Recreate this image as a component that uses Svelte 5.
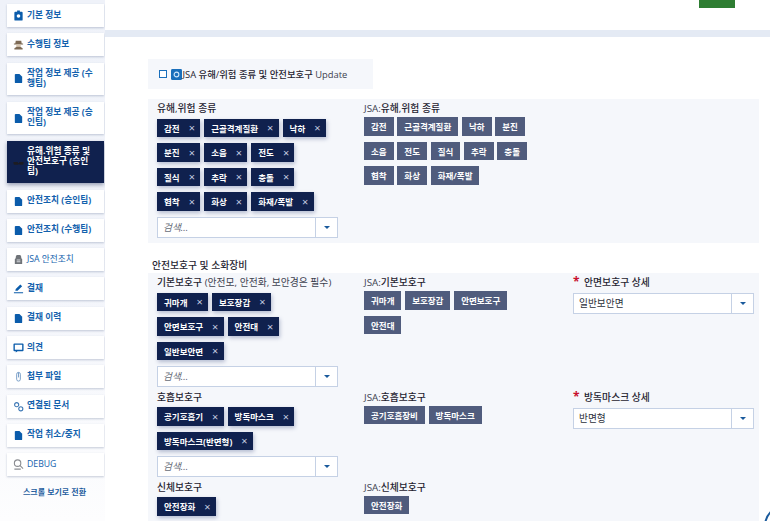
<script>
	const docIcon = 'M6 2h8l6 6v12a2 2 0 0 1-2 2H6a2 2 0 0 1-2-2V4a2 2 0 0 1 2-2z';

	const menu = [
		{ label: '기본 정보', icon: 'clip' },
		{ label: '수행팀 정보', icon: 'person' },
		{ label: '작업 정보 제공 (수행팀)', icon: 'doc' },
		{ label: '작업 정보 제공 (승인팀)', icon: 'doc' },
		{ label: '유해.위험 종류 및 안전보호구 (승인팀)', icon: 'glasses', active: true },
		{ label: '안전조치 (승인팀)', icon: 'doc' },
		{ label: '안전조치 (수행팀)', icon: 'doc' },
		{ label: 'JSA 안전조치', icon: 'jsa', light: true },
		{ label: '결재', icon: 'pen' },
		{ label: '결재 이력', icon: 'doc' },
		{ label: '의견', icon: 'comment' },
		{ label: '첨부 파일', icon: 'paperclip' },
		{ label: '연결된 문서', icon: 'link' },
		{ label: '작업 취소/중지', icon: 'doc' },
		{ label: 'DEBUG', icon: 'debug', light: true }
	];

	const hazards = ['감전', '근골격계질환', '낙하', '분진', '소음', '전도', '질식', '추락', '충돌', '협착', '화상', '화재/폭발'];
	const basicGear = ['귀마개', '보호장갑', '안면보호구', '안전대', '일반보안면'];
	const jsaBasicGear = ['귀마개', '보호장갑', '안면보호구', '안전대'];
	const breathGear = ['공기호흡기', '방독마스크', '방독마스크(반면형)'];
	const jsaBreathGear = ['공기호흡장비', '방독마스크'];
</script>

{#snippet tags(items)}
	<div class="tags">
		{#each items as item}
			<span class="tag">{item}<i>×</i></span>
		{/each}
	</div>
{/snippet}

{#snippet jsaTags(items)}
	<div class="jsa-tags">
		{#each items as item}
			<span class="jsa-tag">{item}</span>
		{/each}
	</div>
{/snippet}

{#snippet combo(text, placeholder)}
	<div class="combo">
		<span class="combo-text" class:placeholder>{text}</span>
		<span class="combo-btn"><b></b></span>
	</div>
{/snippet}

{#snippet jsaLabel(text)}
	<div class="label"><span class="thin">JSA:</span>{text}</div>
{/snippet}

<div class="page">
	<nav class="sidebar">
		{#each menu as item}
			<a class="nav-item" class:active={item.active} class:light={item.light}>
				<svg class="nav-icon" viewBox="0 0 24 24">
					{#if item.icon === 'doc'}
						<path d={docIcon} />
					{:else if item.icon === 'clip'}
						<path fill-rule="evenodd" d="M9 1h6v3h4a2 2 0 0 1 2 2v15a2 2 0 0 1-2 2H5a2 2 0 0 1-2-2V6a2 2 0 0 1 2-2h4zM12 9a4 4 0 1 0 0 8 4 4 0 0 0 0-8z" />
					{:else if item.icon === 'person'}
						<path class="tan" d="M6 4h12l1 6h3v2H2v-2h3z" />
						<path class="skin" d="M7 12h10v5H7z" />
						<path class="tan" d="M3 23v-3l5-3h8l5 3v3z" />
					{:else if item.icon === 'glasses'}
						<path class="dark" d="M1 11h9l1 2h2l1-2h9v3a3 3 0 0 1-3 3h-4a3 3 0 0 1-3-3 3 3 0 0 1-3 3H4a3 3 0 0 1-3-3z" />
					{:else if item.icon === 'jsa'}
						<path class="grey" d="M8 2h8l2 4v3l2 2v11H4V11l2-2V6z" />
						<path class="cut" d="M8 12h8v2H8zM8 16h8v2H8z" />
					{:else if item.icon === 'pen'}
						<path d="M2 20h20v2.5H2zM5 17l1-4L16 3l4 4L10 17z" />
					{:else if item.icon === 'comment'}
						<path d="M21 3H3a2 2 0 0 0-2 2v13a2 2 0 0 0 2 2h3v3l4-3h11a2 2 0 0 0 2-2V5a2 2 0 0 0-2-2zm-1 14H4V6h16z" />
					{:else if item.icon === 'paperclip'}
						<rect class="line clip-line" x="8" y="3" width="8" height="19" rx="4" />
						<path class="line clip-line" d="M12 3v11" />
					{:else if item.icon === 'link'}
						<circle class="line link-line" cx="8" cy="8" r="4.5" />
						<circle class="line link-line" cx="17" cy="17" r="4.5" />
					{:else if item.icon === 'debug'}
						<circle class="line grey-line" cx="10" cy="9" r="7" />
						<path class="line grey-line" d="M15 14l7 7M3 22h14" />
					{/if}
				</svg>
				<span class="nav-text">{item.label}</span>
			</a>
		{/each}
		<div class="scroll-toggle">스크롤 보기로 전환</div>
	</nav>

	<main class="main">
		<header class="topbar"><button class="save" aria-label="저장"></button></header>
		<div class="band"></div>

		<div class="content">
			<div class="update-box">
				<span class="checkbox"></span>
				<svg class="sync" viewBox="0 0 12 12">
					<rect width="12" height="12" rx="1.5" />
					<circle cx="6" cy="6" r="2.6" />
				</svg>
				<span class="update-text">JSA 유해/위험 종류 및 안전보호구 <span class="thin">Update</span></span>
			</div>

			<section class="panel first">
				<div class="row">
					<div class="col">
						<div class="label">유해,위험 종류</div>
						{@render tags(hazards)}
						{@render combo('검색...', true)}
					</div>
					<div class="col">
						{@render jsaLabel('유해,위험 종류')}
						{@render jsaTags(hazards)}
					</div>
				</div>
			</section>

			<h3 class="heading">안전보호구 및 소화장비</h3>

			<section class="panel">
				<div class="row">
					<div class="col">
						<div class="label">기본보호구 <span class="thin">(안전모, 안전화, 보안경은 필수)</span></div>
						{@render tags(basicGear)}
						{@render combo('검색...', true)}
					</div>
					<div class="col">
						{@render jsaLabel('기본보호구')}
						{@render jsaTags(jsaBasicGear)}
					</div>
					<div class="col">
						<div class="label"><span class="req">*</span> 안면보호구 상세</div>
						<div class="detail">{@render combo('일반보안면', false)}</div>
					</div>
				</div>
				<div class="row">
					<div class="col">
						<div class="label">호흡보호구</div>
						{@render tags(breathGear)}
						{@render combo('검색...', true)}
					</div>
					<div class="col">
						{@render jsaLabel('호흡보호구')}
						{@render jsaTags(jsaBreathGear)}
					</div>
					<div class="col">
						<div class="label"><span class="req">*</span> 방독마스크 상세</div>
						<div class="detail">{@render combo('반면형', false)}</div>
					</div>
				</div>
				<div class="row">
					<div class="col">
						<div class="label">신체보호구</div>
						{@render tags(['안전장화'])}
					</div>
					<div class="col">
						{@render jsaLabel('신체보호구')}
						{@render jsaTags(['안전장화'])}
					</div>
				</div>
			</section>
		</div>
	</main>

	<div class="fab"></div>
</div>

<style>
	:global(body) {
		margin: 0;
		overflow: hidden;
		background: #fff;
		font-family: "Open Sans", "Noto Sans CJK KR", sans-serif;
		color: #1f2330;
	}

	.page {
		position: relative;
		display: flex;
		height: 521px;
		overflow: hidden;
	}

	.sidebar {
		width: 105px;
		flex: none;
		box-sizing: border-box;
		padding: 4px 1px 0 7px;
		display: flex;
		flex-direction: column;
		gap: 6.3px;
		background: linear-gradient(180deg, #eff2f9 0%, #f3f5fb 55%, #fdfdfe 100%);
	}

	.nav-item {
		display: flex;
		align-items: center;
		gap: 3px;
		padding: 6.6px 5px 6.6px 6px;
		background: #fff;
		box-shadow: 0 1px 2px rgba(70, 90, 130, 0.3);
		font-size: 8.7px;
		line-height: 9.8px;
		font-weight: 700;
		color: #1261ad;
	}

	.nav-item.active {
		background: #10214e;
		color: #fff;
		box-shadow: 0 2px 4px rgba(16, 33, 78, 0.4);
	}

	.nav-item.light {
		font-weight: 400;
	}

	.nav-icon {
		width: 11px;
		height: 11px;
		margin: -1px 0;
		flex: none;
		fill: #0b5cab;
	}

	.tan { fill: #7d6a55; }
	.skin { fill: #d9c7b0; }
	.dark { fill: #1c1c22; }
	.grey { fill: #6f7378; }
	.cut { fill: #d5d7db; }

	.line {
		fill: none;
		stroke: #3d78b5;
		stroke-width: 3;
	}

	.clip-line { stroke: #6f97c4; stroke-width: 2; }
	.link-line { stroke-width: 2.4; }
	.grey-line { stroke: #8b8d92; stroke-width: 2.4; }

	.nav-text {
		min-width: 0;
	}

	.scroll-toggle {
		margin-top: 4px;
		padding-right: 2px;
		text-align: center;
		font-size: 8px;
		line-height: 12px;
		font-weight: 700;
		color: #1e5c9e;
	}

	.main {
		flex: 1;
		min-width: 0;
		background: #fff;
	}

	.topbar {
		height: 30px;
		display: flex;
		justify-content: flex-end;
		align-items: flex-start;
		padding-right: 35px;
	}

	.save {
		width: 36px;
		height: 8px;
		border: none;
		padding: 0;
		background: #2e7d32;
	}

	.band {
		height: 7px;
		background: #e4eaf4;
	}

	.content {
		padding: 22px 11px 0 43px;
	}

	.update-box {
		width: 225px;
		height: 30px;
		box-sizing: border-box;
		padding-left: 10.5px;
		margin-bottom: 10px;
		display: flex;
		align-items: center;
		background: #f5f7fb;
		font-size: 9.4px;
	}

	.checkbox {
		width: 6.5px;
		height: 6.5px;
		border: 1.5px solid #1a6fbb;
		background: #fff;
		margin-right: 3.5px;
	}

	.sync {
		width: 11px;
		height: 11px;
		flex: none;
		fill: #1a6fbb;
		margin-right: 1px;
	}

	.sync circle {
		fill: none;
		stroke: #cfe6fa;
		stroke-width: 1.2;
	}

	.update-text {
		font-weight: 500;
		white-space: nowrap;
	}

	.thin {
		font-weight: 400;
		color: #3d4250;
	}

	.panel {
		background: #f5f7fb;
		padding: 3px 5px 5px 9px;
	}

	.panel.first {
		height: 136px;
	}

	.heading {
		margin: 16px 0 0 4px;
		font-size: 9.8px;
		line-height: 14px;
		font-weight: 500;
	}

	.row {
		display: grid;
		grid-template-columns: 207px 209px 181px;
		margin-bottom: 3.5px;
	}

	.label {
		font-size: 9.8px;
		line-height: 14px;
		font-weight: 500;
		white-space: nowrap;
	}

	.req {
		margin-right: 2px;
		font-size: 12px;
		line-height: 0;
		font-weight: 700;
		color: #c8102e;
	}

	.tags {
		display: flex;
		flex-wrap: wrap;
		gap: 6px 4px;
		max-width: 181px;
		margin-top: 2.5px;
	}

	.tag {
		height: 18.5px;
		display: inline-flex;
		align-items: center;
		padding: 0 5.5px 0 7px;
		background: #10214e;
		box-shadow: 1px 2px 4px rgba(30, 50, 110, 0.3);
		font-size: 8.5px;
		font-weight: 700;
		color: #fff;
	}

	.tag i {
		width: 6px;
		margin-left: 9px;
		font-style: normal;
		font-weight: 400;
		font-size: 11px;
		text-align: center;
		color: #c5cde0;
	}

	.jsa-tags {
		display: flex;
		flex-wrap: wrap;
		gap: 6px 3.7px;
		max-width: 175px;
		margin-top: 1px;
	}

	.jsa-tag {
		height: 18.5px;
		display: inline-flex;
		align-items: center;
		padding: 0 7px;
		background: #505c7d;
		font-size: 8.5px;
		font-weight: 700;
		color: #fff;
	}

	.combo {
		display: flex;
		width: 181px;
		height: 21px;
		box-sizing: border-box;
		margin-top: 6px;
		background: #fff;
		border: 1px solid #c5d1e5;
	}

	.detail .combo {
		margin-top: 3px;
	}

	.combo-text {
		flex: 1;
		padding-left: 5px;
		font-size: 9.7px;
		line-height: 19px;
		color: #2b2f3a;
	}

	.combo-text.placeholder {
		font-style: italic;
		color: #666c78;
	}

	.combo-btn {
		width: 21px;
		display: flex;
		align-items: center;
		justify-content: center;
		border-left: 1px solid #c5d1e5;
	}

	.combo-btn b {
		width: 0;
		height: 0;
		border: 3px solid transparent;
		border-bottom: none;
		border-top-color: #1a5a9c;
	}

	.fab {
		position: absolute;
		left: 764px;
		top: 505px;
		width: 42px;
		height: 42px;
		box-sizing: border-box;
		border: 2px solid #1a5a9c;
		border-radius: 50%;
	}
</style>
